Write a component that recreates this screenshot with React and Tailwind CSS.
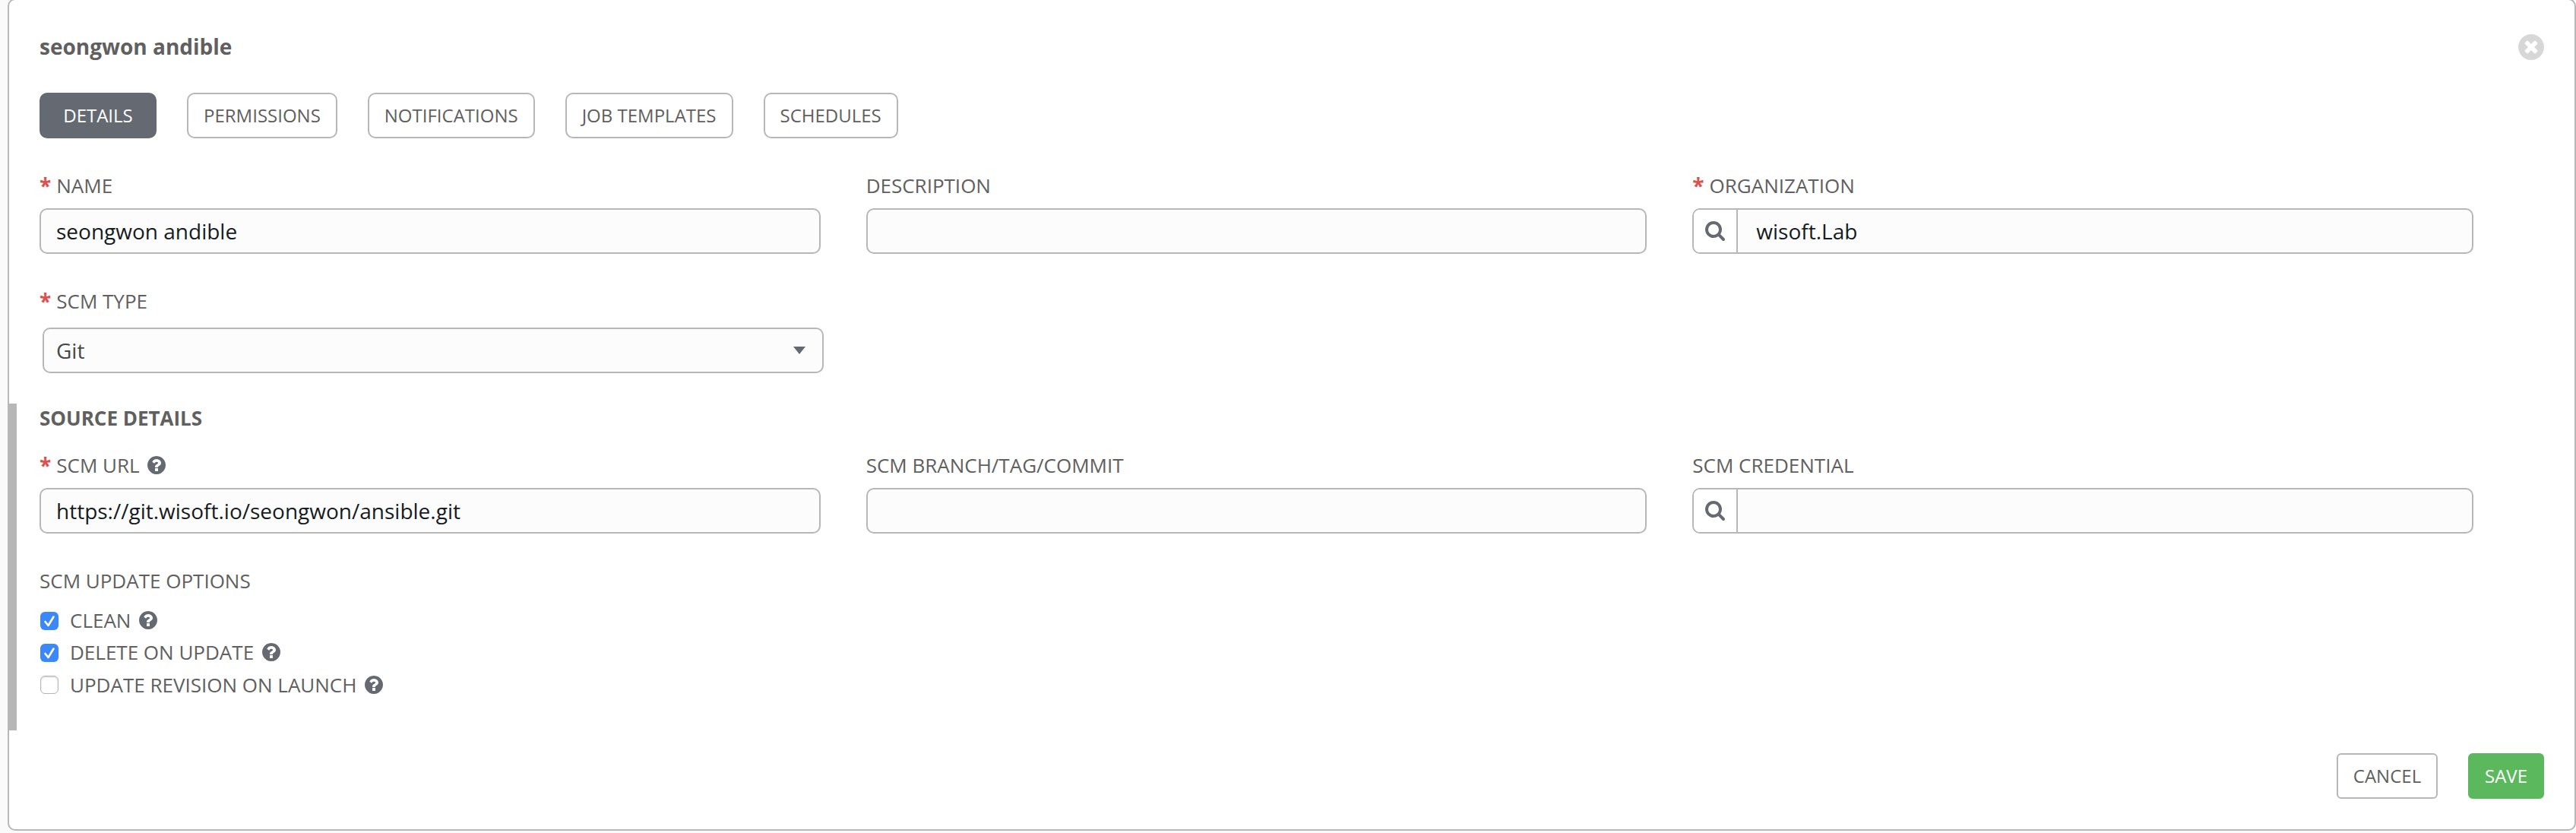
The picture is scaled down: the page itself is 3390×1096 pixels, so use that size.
const TABS = ["PERMISSIONS", "NOTIFICATIONS", "JOB TEMPLATES", "SCHEDULES"];

function HelpIcon({ className = "" }) {
  return (
    <svg viewBox="0 0 1536 1536" className={"h-6 w-6 shrink-0 fill-[#646972] " + className}>
      <path d="M896 1248v-192q0-14-9-23t-23-9h-192q-14 0-23 9t-9 23v192q0 14 9 23t23 9h192q14 0 23-9t9-23zM1152 576q0-88-55.500-163t-138.500-116-170-41q-243 0-371 213-15 24 8 42l132 100q7 6 19 6 16 0 25-12 53-68 86-92 34-24 86-24 48 0 85.500 26t37.500 59q0 38-20 61t-68 45q-63 28-115.500 86.500t-52.500 125.500v36q0 14 9 23t23 9h192q14 0 23-9t9-23q0-19 21.500-49.500t54.500-49.500q32-18 49-28.500t46-35 44.500-48 28-60.500 12.500-81zM1536 768q0 209-103 385.500t-279.500 279.500-385.500 103-385.500-103-279.500-279.500-103-385.500 103-385.500 279.500-279.500 385.500-103 385.500 103 279.500 279.500 103 385.500z" />
    </svg>
  );
}

function SearchIcon() {
  return (
    <svg viewBox="0 0 1664 1664" className="h-[26px] w-[26px] fill-[#646972]">
      <path d="M1152 704q0-185-131.500-316.500t-316.500-131.500-316.500 131.500-131.500 316.500 131.500 316.500 316.500 131.500 316.500-131.500 131.500-316.500zM1664 1536q0 52-38 90t-90 38q-54 0-90-38l-343-342q-179 124-399 124-143 0-273.500-55.500t-225-150-150-225-55.500-273.500 55.500-273.500 150-225 225-150 273.500-55.500 273.500 55.500 225 150 150 225 55.500 273.500q0 220-124 399l343 343q37 37 37 90z" />
    </svg>
  );
}

function CloseIcon() {
  return (
    <svg viewBox="0 0 1536 1536" className="h-[34px] w-[34px] fill-[#d7d7d7]">
      <path d="M1149 994q0-26-19-45l-181-181 181-181q19-19 19-45 0-27-19-46l-90-90q-19-19-46-19-26 0-45 19l-181 181-181-181q-19-19-45-19-27 0-46 19l-90 90q-19 19-19 46 0 26 19 45l181 181-181 181q-19 19-19 45 0 27 19 46l90 90q19 19 46 19 26 0 45-19l181-181 181 181q19 19 45 19 27 0 46-19l90-90q19-19 19-46zM1536 768q0 209-103 385.500t-279.500 279.500-385.500 103-385.500-103-279.500-279.500-103-385.500 103-385.500 279.500-279.500 385.500-103 385.500 103 279.500 279.500 103 385.500z" />
    </svg>
  );
}

function Label({ children, required, help }) {
  return (
    <div className="flex h-9 items-center pb-[2px] text-[26px] leading-9 whitespace-nowrap">
      {required && <span className="mr-[7px] text-[28px] font-bold text-[#d9534f]">*</span>}
      {children}
      {help && <HelpIcon className="ml-2.5" />}
    </div>
  );
}

function Field({ label, required, help, value = "", lookup }) {
  return (
    <div>
      <Label required={required} help={help}>{label}</Label>
      <div className="mt-[11px] flex h-[60px] overflow-hidden rounded-[10px] border-2 border-[#b7b7b7] bg-[#fcfcfc]">
        {lookup && (
          <div className="flex w-[58px] shrink-0 items-center justify-center border-r-2 border-[#b7b7b7] bg-white">
            <SearchIcon />
          </div>
        )}
        <div className={"leading-[56px] text-[28px] text-[#161b1f] " + (lookup ? "pl-6" : "pl-5")}>{value}</div>
      </div>
    </div>
  );
}

function Option({ label, checked }) {
  return (
    <div className="flex h-[42px] items-center text-[26px]">
      {checked ? (
        <span className="flex h-6 w-6 items-center justify-center rounded-[6px] bg-[#3b88fd]">
          <svg viewBox="0 0 24 24" className="h-6 w-6 fill-none stroke-white stroke-[2.6]" strokeLinecap="round" strokeLinejoin="round">
            <path d="M6.500 13l4 5L17.500 6.500" />
          </svg>
        </span>
      ) : (
        <span className="h-6 w-6 rounded-[6px] border border-[#b5b5b5] bg-white shadow-[inset_0_1px_2px_rgba(0,0,0,0.2)]" />
      )}
      <span className={"ml-[15px] flex items-center whitespace-nowrap " + (checked ? "pb-[2px]" : "")}>
        {label}
        <HelpIcon className="ml-[11px]" />
      </span>
    </div>
  );
}

export default function App() {
  return (
    <div className="h-[1096px] w-[3390px] overflow-hidden bg-[#fafafa] pl-[10px] font-['Open_Sans',sans-serif] text-[#606060]">
      <div className="-mt-[2px] flex h-[1095px] flex-col rounded-[10px] border-2 border-[#b7b7b7] bg-white">
        <div className="mt-[42px] ml-10 mr-10 flex h-10 items-center justify-between">
          <h1 className="pb-[2px] text-[28px] leading-10 font-bold">seongwon andible</h1>
          <CloseIcon />
        </div>
        <div className="mt-10 ml-10 flex gap-10 text-[24px] leading-[56px]">
          <div className="h-[60px] w-[154px] rounded-[10px] border-2 border-[#646972] bg-[#646972] text-center text-white">DETAILS</div>
          {TABS.map((tab) => (
            <div key={tab} className="h-[60px] rounded-[10px] border-2 border-[#b7b7b7] px-5 whitespace-nowrap">{tab}</div>
          ))}
        </div>
        <div className="mt-[45px] ml-10 grid w-[3203px] grid-cols-3 gap-x-[60px]">
          <Field label="NAME" required value="seongwon andible" />
          <Field label="DESCRIPTION" />
          <Field label="ORGANIZATION" required lookup value="wisoft.Lab" />
        </div>
        <div className="mt-[45px] ml-10 w-[1032px]">
          <Label required>SCM TYPE</Label>
          <div className="mt-4 ml-1 flex h-[60px] items-center justify-between rounded-[10px] border-2 border-[#b7b7b7] bg-[#fcfcfc] pr-[22px] pl-4 text-[28px] text-[#484848]">
            <span className="leading-[56px]">Git</span>
            <svg viewBox="0 0 16 10" className="h-[10px] w-4 fill-[#646972]"><path d="M0 0h16L8 10z" /></svg>
          </div>
        </div>
        <div className="mt-10 h-[430px] border-l-[10px] border-[#b7b7b7] pl-[30px]">
          <h2 className="pt-px text-[26px] leading-9 font-bold">SOURCE DETAILS</h2>
          <div className="mt-[27px] grid w-[3203px] grid-cols-3 gap-x-[60px]">
            <Field label="SCM URL" required help value="https://git.wisoft.io/seongwon/ansible.git" />
            <Field label="SCM BRANCH/TAG/COMMIT" />
            <Field label="SCM CREDENTIAL" lookup />
          </div>
          <div className="mt-[45px]">
            <Label>SCM UPDATE OPTIONS</Label>
          </div>
          <div className="mt-[13px] ml-px">
            <Option label="CLEAN" checked />
            <Option label="DELETE ON UPDATE" checked />
            <Option label="UPDATE REVISION ON LAUNCH" />
          </div>
        </div>
        <div className="mt-[30px] mr-10 flex justify-end gap-10 text-[24px] leading-[56px]">
          <div className="h-[60px] w-[133px] rounded-[6px] border-2 border-[#b7b7b7] text-center">CANCEL</div>
          <div className="h-[60px] w-[100px] rounded-[6px] border-2 border-[#5cb85c] bg-[#5cb85c] text-center text-white">SAVE</div>
        </div>
      </div>
    </div>
  );
}
